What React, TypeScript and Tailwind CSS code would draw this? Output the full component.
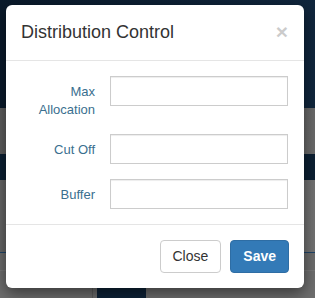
import { type ReactNode } from 'react'

/* ─── form row ─── */

function Row({ label, children }: { label: ReactNode; children: ReactNode }) {
  return (
    <div className="grid grid-cols-[74px_1fr] gap-x-[15px] mb-[15px] last:mb-0 items-start">
      <label className="pt-[7px] text-right text-[13px] leading-[18px] text-[#3a6f8f]">{label}</label>
      {children}
    </div>
  )
}

const Input = () => (
  <input
    type="text"
    className="h-[30px] w-full border border-[#cccccc] bg-white px-2 text-[13px] outline-none shadow-[inset_0_1px_1px_rgba(0,0,0,0.075)]"
  />
)

export default function App() {
  return (
    <div className="relative w-[315px] h-[298px] overflow-hidden font-['Liberation_Sans',Arial,sans-serif]">
      {/* page behind the backdrop */}
      <div className="flex flex-col h-full">
        <div className="h-[108px] bg-gradient-to-r from-[#0a1a2b] to-[#10263d]" />
        <div className="h-[46px] bg-gradient-to-r from-[#5e5e5e] to-[#6a6a6a]" />
        <div className="h-[26px] bg-[#0c2033]" />
        <div className="h-[72px] bg-gradient-to-r from-[#666666] to-[#727272]" />
        <div className="h-px bg-[#1f4468]" />
        <div className="h-[17px] bg-[#6c6c6c]" />
        <div className="h-px bg-[#777777]" />
        <div className="flex-1 flex bg-[#6e6e6e]">
          <div className="w-[92px]" />
          <div className="w-px bg-[#5c5c5c]" />
          <div className="w-[4px]" />
          <div className="w-[49px] bg-[#0e2338]" />
        </div>
      </div>

      {/* modal */}
      <div className="absolute left-[6px] top-[5px] w-[298px] h-[283px] rounded-[6px] bg-white shadow-[0_5px_15px_rgba(0,0,0,0.5)] flex flex-col">
        <div className="flex items-start justify-between pl-[15px] pr-[16px] pt-[15px] pb-[15px] border-b border-[#e5e5e5] h-[56px]">
          <h4 className="text-[18px] leading-[25px] text-[#333333]">Distribution Control</h4>
          <button className="text-[21px] leading-[21px] font-bold text-black opacity-20 mt-[1px]">×</button>
        </div>

        <div className="pl-[15px] pr-[16px] py-[15px]">
          <Row label={<>Max<br />Allocation</>}>
            <Input />
          </Row>
          <Row label="Cut Off">
            <Input />
          </Row>
          <Row label="Buffer">
            <Input />
          </Row>
        </div>

        <div className="flex justify-end gap-[9px] px-[15px] pt-[15px] border-t border-[#e5e5e5]">
          <button className="h-[33px] px-[12px] rounded-[4px] border border-[#cccccc] bg-white text-[14px] text-[#333333]">
            Close
          </button>
          <button className="h-[33px] px-[12px] rounded-[4px] border border-[#2e6da4] bg-[#337ab7] text-[14px] font-bold text-white">
            Save
          </button>
        </div>
      </div>
    </div>
  )
}
